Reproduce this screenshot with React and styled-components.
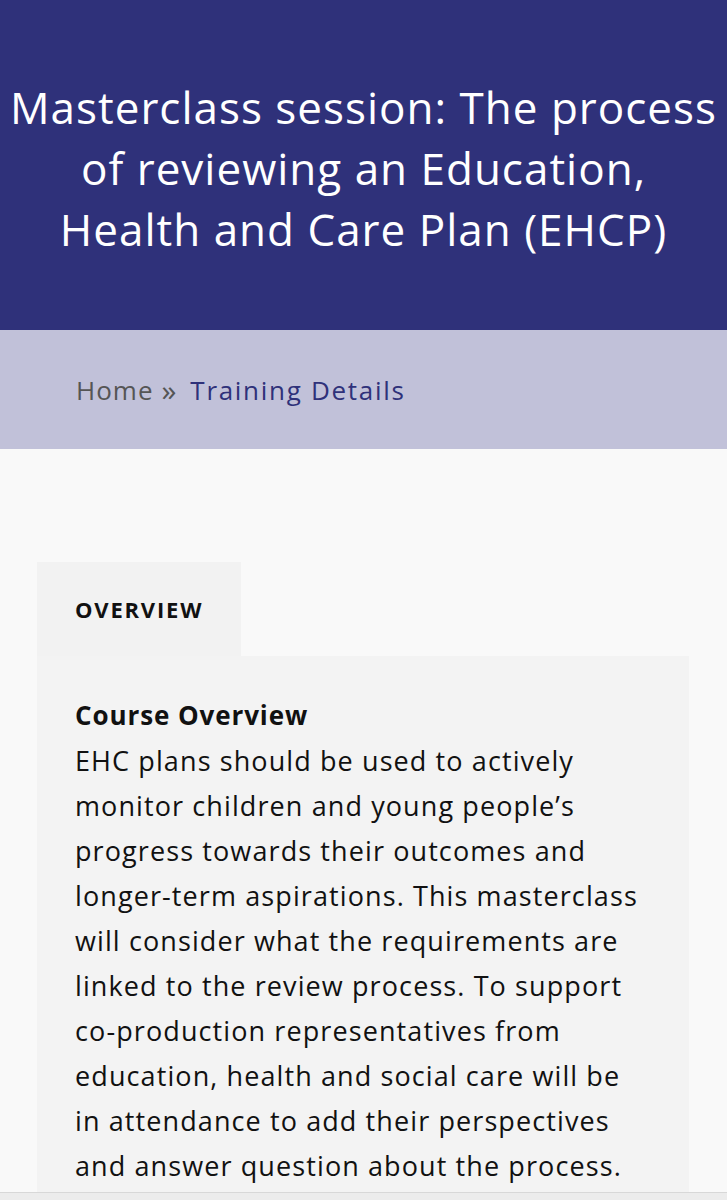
import React from "react";
import styled, { createGlobalStyle } from "styled-components";

const Global = createGlobalStyle`
  html, body { margin: 0; padding: 0; background: #f9f9f9; }
  body { font-family: "Open Sans", sans-serif; -webkit-font-smoothing: antialiased; }
`;

const Page = styled.div`
  width: 727px;
  height: 1200px;
  overflow: hidden;
  background: #f9f9f9;
  display: flex;
  flex-direction: column;
`;

const Hero = styled.header`
  background: #2f317a;
  height: 330px;
  flex: none;
  display: flex;
  align-items: center;
  justify-content: center;
  box-sizing: border-box;
  padding: 6px 8px 0;
`;

const Title = styled.h1`
  margin: 0;
  color: #ffffff;
  font-family: "Open Sans", sans-serif;
  font-weight: 500;
  font-size: 44px;
  letter-spacing: 1px;
  line-height: 61px;
  text-align: center;
`;

const Crumbs = styled.nav`
  background: #c1c1d9;
  height: 119px;
  flex: none;
  display: flex;
  align-items: center;
  padding-left: 76px;
  font-size: 26px;
  letter-spacing: 1px;
`;

const Crumb = styled.span`
  color: ${(p) => (p.$active ? "#2f317a" : "#555555")};
  letter-spacing: ${(p) => (p.$active ? "1.7px" : "1px")};
`;

const Sep = styled.span`
  color: #555555;
  margin: 0 13px 0 8px;
  font-size: 30px;
`;

const Main = styled.main`
  padding: 113px 38px 0 37px;
  display: flex;
  flex-direction: column;
  flex: 1;
  min-height: 0;
`;

const Tabs = styled.div`
  display: flex;
`;

const Tab = styled.div`
  background: #f2f2f2;
  width: 204px;
  height: 94px;
  box-sizing: border-box;
  padding-left: 38px;
  display: flex;
  align-items: center;
  font-weight: 700;
  font-size: 22px;
  letter-spacing: 1.8px;
  color: #111;
`;

const Panel = styled.section`
  background: #f3f3f3;
  padding: 37px 38px 0 38px;
  flex: 1;
  color: #111;
`;

const Heading = styled.h2`
  margin: 0;
  font-size: 26px;
  font-weight: 700;
  letter-spacing: 0.9px;
  line-height: 45px;
`;

const Body = styled.p`
  margin: 0;
  font-size: 27px;
  letter-spacing: 1.1px;
  line-height: 45px;
`;

const BottomBar = styled.div`
  height: 7px;
  flex: none;
  background: #ececec;
  border-top: 1px solid #d8d8d8;
`;

export default function App() {
  return (
    <Page>
      <Global />
      <Hero>
        <Title>
          Masterclass session: The process of reviewing an Education, Health and Care Plan (EHCP)
        </Title>
      </Hero>
      <Crumbs>
        <Crumb>Home</Crumb>
        <Sep>»</Sep>
        <Crumb $active>Training Details</Crumb>
      </Crumbs>
      <Main>
        <Tabs>
          <Tab>OVERVIEW</Tab>
        </Tabs>
        <Panel>
          <Heading>Course Overview</Heading>
          <Body>
            EHC plans should be used to actively monitor children and young people’s progress
            towards their outcomes and longer-term aspirations. This masterclass will consider
            what the requirements are linked to the review process. To support co-production
            representatives from education, health and social care will be in attendance to add
            their perspectives and answer question about the process.
          </Body>
        </Panel>
      </Main>
      <BottomBar />
    </Page>
  );
}
